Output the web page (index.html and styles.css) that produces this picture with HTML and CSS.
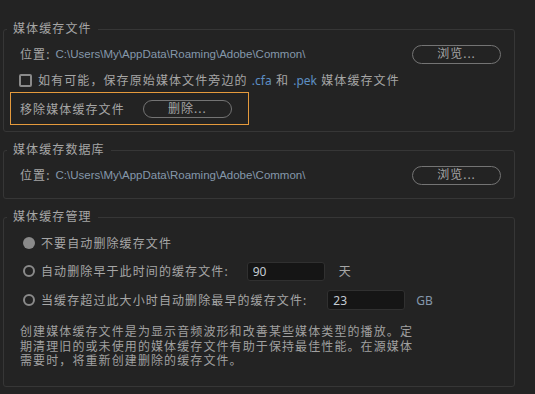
FILE: index.html
```html
<!DOCTYPE html>
<html lang="zh-CN">
<head>
    <meta charset="UTF-8">
    <title>媒体缓存</title>
    <link rel="stylesheet" href="styles.css">
</head>
<body>
    <div class="prefs">
        <fieldset class="group group-files">
            <legend>媒体缓存文件</legend>
            <div class="row loc-row">
                <span class="label">位置:</span>
                <span class="path">C:\Users\My\AppData\Roaming\Adobe\Common\</span>
                <button class="pill browse">浏览...</button>
            </div>
            <label class="row check-row">
                <span class="check"></span>
                <span>如有可能，保存原始媒体文件旁边的 <span class="ext">.cfa</span> 和 <span class="ext">.pek</span> 媒体缓存文件</span>
            </label>
            <div class="remove-box">
                <span>移除媒体缓存文件</span>
                <button class="pill delete">删除...</button>
            </div>
        </fieldset>

        <fieldset class="group group-db">
            <legend>媒体缓存数据库</legend>
            <div class="row loc-row">
                <span class="label">位置:</span>
                <span class="path">C:\Users\My\AppData\Roaming\Adobe\Common\</span>
                <button class="pill browse">浏览...</button>
            </div>
        </fieldset>

        <fieldset class="group group-manage">
            <legend>媒体缓存管理</legend>
            <label class="row radio-row first">
                <span class="radio on"></span>
                <span>不要自动删除缓存文件</span>
            </label>
            <label class="row radio-row second">
                <span class="radio"></span>
                <span class="opt-text">自动删除早于此时间的缓存文件:</span>
                <input class="num days" type="text" value="90">
                <span class="unit">天</span>
            </label>
            <label class="row radio-row third">
                <span class="radio"></span>
                <span class="opt-text">当缓存超过此大小时自动删除最早的缓存文件:</span>
                <input class="num size" type="text" value="23">
                <span class="unit gb">GB</span>
            </label>
            <p class="note">创建媒体缓存文件是为显示音频波形和改善某些媒体类型的播放。定期清理旧的或未使用的媒体缓存文件有助于保持最佳性能。在源媒体需要时，将重新创建删除的缓存文件。</p>
        </fieldset>
    </div>
</body>
</html>
```

FILE: styles.css
```css
body {
    margin: 0;
    background-color: #232323;
    color: #a6a6a6;
    font-family: "Noto Sans", "Noto Sans CJK SC", sans-serif;
    font-size: 12px;
    letter-spacing: 1.1px;
}

.prefs {
    padding: 21px 20px 0 3px;
}

.group {
    margin: 0 0 10px 0;
    padding: 0;
    border: 1px solid #363636;
    border-radius: 3px;
}

.group legend {
    margin-left: 3px;
    padding: 0 6px;
    line-height: 16px;
    height: 16px;
    color: #a6a6a6;
}

.row {
    display: flex;
    align-items: center;
    height: 20px;
}

.loc-row {
    margin-top: 7px;
    padding-left: 16px;
}

.label {
    margin-right: 5px;
}

.path {
    flex: 1;
    font-family: "Liberation Sans", sans-serif;
    font-size: 11.5px;
    letter-spacing: 0;
    color: #8598ab;
}

.pill {
    background: transparent;
    border: 1px solid #747474;
    border-radius: 10px;
    color: #a6a6a6;
    font-family: inherit;
    font-size: 12px;
    letter-spacing: 1px;
    padding: 0;
    height: 19px;
    line-height: 16px;
    width: 89px;
}

.browse {
    margin-right: 13px;
}

.check-row {
    margin-top: 6px;
    padding-left: 15px;
}

.check {
    width: 9px;
    height: 9px;
    border: 2px solid #8a8a8a;
    border-radius: 2px;
    margin-right: 6px;
}

.ext {
    font-size: 12px;
    letter-spacing: 0;
    color: #5d8fc4;
}

.remove-box {
    display: flex;
    align-items: center;
    box-sizing: border-box;
    width: 239px;
    height: 33px;
    margin: 2px 0 6px 6px;
    padding-left: 9px;
    border: 1px solid #e59a3c;
}

.delete {
    margin-left: 18px;
    height: 18px;
}

.group-db .loc-row {
    margin-bottom: 13px;
}

.radio-row {
    padding-left: 19px;
}

.radio-row.first {
    margin-top: 8px;
}

.radio-row.second {
    margin-top: 8px;
}

.radio-row.third {
    margin-top: 9px;
}

.radio {
    width: 8px;
    height: 8px;
    border: 2px solid #8a8a8a;
    border-radius: 50%;
    margin-right: 6px;
}

.radio.on {
    width: 12px;
    height: 12px;
    border: none;
    background-color: #8a8a8a;
}

.num {
    box-sizing: border-box;
    height: 19px;
    width: 78px;
    background-color: #151515;
    border: 1px solid #303030;
    border-radius: 3px;
    color: #c4ccd4;
    font-family: inherit;
    font-size: 12px;
    letter-spacing: 0;
    padding: 0 5px;
    outline: none;
}

.days {
    margin-left: 18px;
}

.size {
    margin-left: 20px;
    height: 20px;
}

.unit {
    margin-left: 14px;
}

.unit.gb {
    margin-left: 11px;
    font-size: 12px;
    letter-spacing: 0;
    color: #8598ab;
}

.note {
    margin: 15px 8px 17px 16px;
    line-height: 14.5px;
    width: 400px;
    color: #a0a0a0;
}
```
